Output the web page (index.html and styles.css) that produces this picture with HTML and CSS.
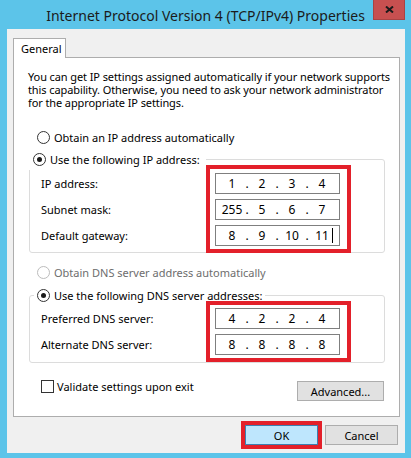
FILE: index.html
```html
<!DOCTYPE html>
<html lang="en">
<head>
    <meta charset="UTF-8">
    <meta name="viewport" content="width=device-width, initial-scale=1.0">
    <title>Internet Protocol Version 4 (TCP/IPv4) Properties</title>
    <link rel="stylesheet" href="styles.css">
</head>
<body>

<div class="window">
    <div class="titlebar">
        <span class="title">Internet Protocol Version 4 (TCP/IPv4) Properties</span>
        <div class="close">
            <svg width="9" height="7" viewBox="0 0 9 7"><path d="M1 0.5 L8 6.5 M8 0.5 L1 6.5" stroke="#1a1a1a" stroke-width="2"/></svg>
        </div>
    </div>

    <div class="client">
        <div class="tab">General</div>
        <div class="panel">
            <p class="intro">You can get IP settings assigned automatically if your network supports this capability. Otherwise, you need to ask your network administrator for the appropriate IP settings.</p>

            <div class="option">
                <span class="radio"></span>
                <span>Obtain an IP address automatically</span>
            </div>

            <div class="group">
                <div class="legend legend-marked">
                    <span class="radio checked"></span>
                    <span>Use the following IP address:</span>
                </div>
                <div class="fields">
                    <div class="labels labels-ip">
                        <span>IP address:</span>
                        <span>Subnet mask:</span>
                        <span>Default gateway:</span>
                    </div>
                    <div class="inputs marked inputs-ip">
                        <div class="ipbox"><span>1</span><i>.</i><span>2</span><i>.</i><span>3</span><i>.</i><span>4</span></div>
                        <div class="ipbox"><span>255</span><i>.</i><span>5</span><i>.</i><span>6</span><i>.</i><span>7</span></div>
                        <div class="ipbox"><span>8</span><i>.</i><span>9</span><i>.</i><span>10</span><i>.</i><span>11<b class="caret"></b></span></div>
                    </div>
                </div>
            </div>

            <div class="option option-dns disabled">
                <span class="radio"></span>
                <span>Obtain DNS server address automatically</span>
            </div>

            <div class="group group-dns">
                <div class="legend">
                    <span class="radio checked"></span>
                    <span>Use the following DNS server addresses:</span>
                </div>
                <div class="fields">
                    <div class="labels labels-dns">
                        <span>Preferred DNS server:</span>
                        <span>Alternate DNS server:</span>
                    </div>
                    <div class="inputs marked inputs-dns">
                        <div class="ipbox"><span>4</span><i>.</i><span>2</span><i>.</i><span>2</span><i>.</i><span>4</span></div>
                        <div class="ipbox"><span>8</span><i>.</i><span>8</span><i>.</i><span>8</span><i>.</i><span>8</span></div>
                    </div>
                </div>
            </div>

            <div class="validate">
                <label class="check-label"><span class="checkbox"></span>Validate settings upon exit</label>
                <button class="btn btn-advanced">Advanced...</button>
            </div>
        </div>

        <div class="actions">
            <div class="marked ok-wrap"><button class="btn btn-ok">OK</button></div>
            <button class="btn">Cancel</button>
        </div>
    </div>
</div>

</body>
</html>
```

FILE: styles.css
```css
body {
    margin: 0;
    font-family: "Noto Sans", "Open Sans", sans-serif;
    font-size: 11px;
    color: #000;
}
.window {
    width: 411px;
    height: 458px;
    background-color: #5cc4e9;
    display: flex;
    flex-direction: column;
}
.titlebar {
    position: relative;
    height: 29px;
    display: flex;
    justify-content: center;
    align-items: center;
}
.title {
    font-size: 14px;
    color: #1b1b1b;
    margin-top: 1px;
}
.close {
    position: absolute;
    top: 0;
    right: 6px;
    width: 32px;
    height: 20px;
    box-sizing: border-box;
    background-color: #c75050;
    border: 1px solid #a94343;
    border-top: none;
    display: flex;
    justify-content: center;
    align-items: center;
}
.client {
    flex: 1;
    margin: 0 6px 5px 7px;
    padding: 9px 5px 0 6px;
    background-color: #f0f0f0;
}
.tab {
    position: relative;
    z-index: 1;
    width: 53px;
    height: 20px;
    box-sizing: border-box;
    margin-bottom: -1px;
    padding-left: 7px;
    line-height: 19px;
    background-color: #fff;
    border: 1px solid #adadad;
    border-bottom: none;
}
.panel {
    height: 360px;
    box-sizing: border-box;
    border: 1px solid #adadad;
    background-color: #fff;
}
.intro {
    margin: 12px 4px 0 14px;
    line-height: 13px;
    letter-spacing: -0.1px;
}
.option {
    display: flex;
    align-items: center;
    gap: 4px;
    height: 16px;
    margin: 20px 0 0 23px;
}
.option-dns {
    margin-top: 11px;
}
.disabled {
    color: #6d6d6d;
}
.radio {
    width: 13px;
    height: 13px;
    box-sizing: border-box;
    border: 1px solid #333;
    border-radius: 50%;
    background-color: #fff;
    display: flex;
    justify-content: center;
    align-items: center;
}
.disabled .radio {
    border-color: #bcbcbc;
}
.radio.checked::after {
    content: "";
    width: 5px;
    height: 5px;
    border-radius: 50%;
    background-color: #1a1a1a;
}
.group {
    display: flex;
    flex-direction: column;
    margin: 14px 14px 0 15px;
    border: 1px solid #dcdcdc;
    border-radius: 3px;
}
.group-dns {
    margin-top: 15px;
}
.legend {
    align-self: flex-start;
    display: flex;
    align-items: center;
    gap: 4px;
    height: 16px;
    margin: -9px 0 0 4px;
    padding: 0 3px;
    background-color: #fff;
}
.legend-marked {
    box-sizing: border-box;
    width: 182px;
    height: 22px;
    margin: -12px 0 0 -6px;
    padding: 0 0 0 9px;
}
.marked {
    border: 4px solid #e3202a;
}
.fields {
    display: flex;
}
.labels {
    width: 176px;
    padding-left: 11px;
    box-sizing: border-box;
    display: flex;
    flex-direction: column;
    gap: 5px;
}
.labels span {
    height: 21px;
    line-height: 21px;
}
.labels-ip {
    padding-top: 3px;
}
.labels-dns {
    padding-top: 5px;
}
.inputs {
    width: 145px;
    box-sizing: border-box;
    display: flex;
    flex-direction: column;
    gap: 5px;
    background-color: #fff;
}
.inputs-ip {
    margin: -5px 0 -1px 0;
    padding: 4px 7px 3px 5px;
}
.inputs-dns {
    margin-top: -2px;
    padding: 3px 6px 3px 5px;
}
.ipbox {
    width: 125px;
    height: 21px;
    box-sizing: border-box;
    border: 1px solid #7f7f7f;
    display: flex;
    align-items: center;
    padding: 0 5px;
    font-size: 12px;
}
.ipbox span {
    width: 22px;
    text-align: center;
    position: relative;
}
.ipbox i {
    width: 8px;
    text-align: center;
    font-style: normal;
}
.caret {
    position: absolute;
    top: 1px;
    right: 0;
    width: 1px;
    height: 15px;
    background-color: #000;
}
.validate {
    display: flex;
    align-items: flex-start;
    margin-top: 16px;
    padding: 0 15px 0 27px;
}
.check-label {
    display: flex;
    align-items: center;
    gap: 3px;
    height: 14px;
}
.checkbox {
    width: 13px;
    height: 13px;
    box-sizing: border-box;
    border: 1px solid #333;
    background-color: #fff;
}
.btn {
    width: 73px;
    height: 20px;
    box-sizing: border-box;
    padding: 0;
    font-family: inherit;
    font-size: 11px;
    background-color: #e1e1e1;
    border: 1px solid #adadad;
    color: #000;
}
.btn-advanced {
    width: 87px;
    margin: 2px 0 0 auto;
}
.actions {
    display: flex;
    justify-content: flex-end;
    align-items: center;
    gap: 3px;
    margin: 4px 2px 0 0;
}
.ok-wrap {
    display: flex;
}
.btn-ok {
    background-color: #bee6fd;
    border-color: #3c7fb1;
}
```
